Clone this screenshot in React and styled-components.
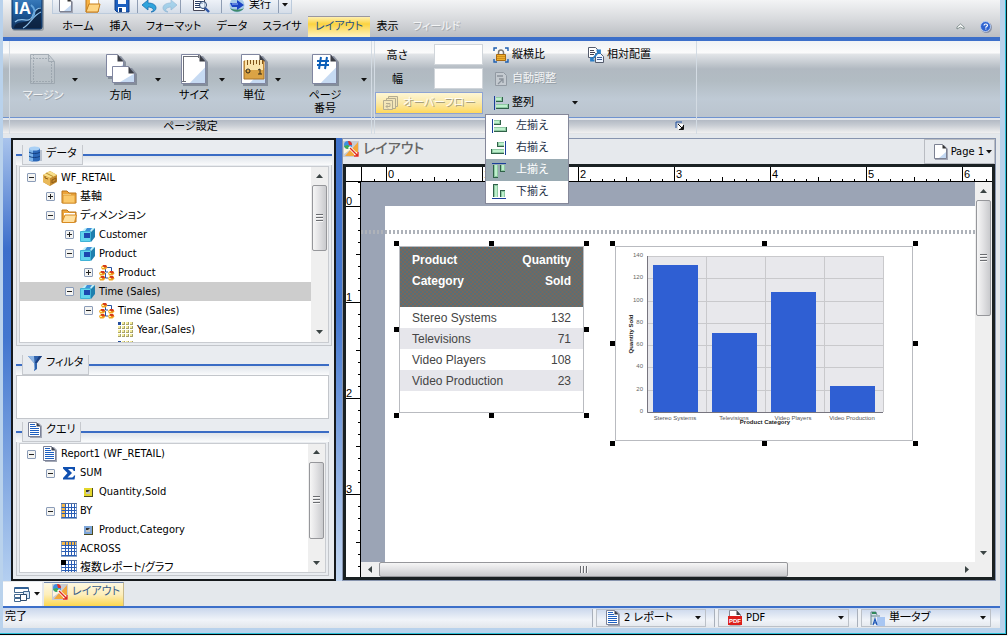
import React from "react"
import styled, { createGlobalStyle } from "styled-components"

const GlobalStyle = createGlobalStyle`
  * {
    box-sizing: border-box;
  }
  body {
    margin: 0;
    background: #f4f4f4;
    color: #000;
    font-family: "DejaVu Sans Condensed", "Noto Sans CJK JP", sans-serif;
    font-size: 11px;
    line-height: 16px;
  }
  button, input, select {
    font: inherit;
    color: inherit;
    margin: 0;
    padding: 0;
    border: 0;
    background: none;
  }
  svg {
    display: block;
    flex: none;
  }
`

/* ---------- icons ---------- */

const Svg = ({ w = 16, h = 16, box, children }) => (
  <svg width={w} height={h} viewBox={box || `0 0 ${w} ${h}`} aria-hidden="true">
    {children}
  </svg>
)

const CaretIcon = () => (
  <Svg w={6} h={4}><path d="M0 0h6L3 3.5z" fill="#111" /></Svg>
)

const NewIcon = () => (
  <Svg>
    <path d="M2 1h9l4 4v11H2z" fill="#a3a7b5" />
    <path d="M1.500 .500h8l4 4v10h-12z" fill="#fff" stroke="#7c8192" />
    <path d="M9.500 .500v4h4z" fill="#333" />
    <path d="M13 8v6H6z" fill="#c3d8f2" />
  </Svg>
)

const OpenIcon = () => (
  <Svg>
    <path d="M1 1h5l2 2h5v12H1z" fill="#f6b143" stroke="#b9741a" />
    <path d="M5 3h8v4H5z" fill="#fff" />
    <path d="M4 7h11l-2 8H1z" fill="#ffd685" stroke="#c77f1c" />
  </Svg>
)

const SaveIcon = () => (
  <Svg>
    <path d="M1 1h14v14H3l-2-2z" fill="#1b5fc0" stroke="#123f86" />
    <path d="M4 1h8v6H4z" fill="#f4f8ff" />
    <path d="M4 10h8v5H4z" fill="#fff" />
    <path d="M5 11h3v4H5z" fill="#123f86" />
  </Svg>
)

const UndoIcon = ({ faded }) => (
  <Svg>
    <g opacity={faded ? 0.35 : 1} transform={faded ? "matrix(-1 0 0 1 16 0)" : undefined}>
      <path d="M1 8l6-5v3c5 0 8 2 8 5 0 2-2 4-5 4 2-1 3-2 2-3s-2-2-5-2v3z" fill="#2fa4dc" stroke="#1b6fae" strokeWidth=".8" />
    </g>
  </Svg>
)

const PreviewIcon = () => (
  <Svg w={18}>
    <path d="M1.500 0h11v13.500h-11z" fill="#fff" stroke="#445" />
    <path d="M3 2.500h8M3 4.500h8M3 6.500h8M3 8.500h5M3 10.500h5" stroke="#2c3e63" />
    <circle cx="11" cy="8" r="3.5" fill="#dff0ff" fillOpacity=".7" stroke="#29446f" />
    <path d="M13 11l4 4" stroke="#2d55a5" strokeWidth="2.4" />
  </Svg>
)

const RunIcon = () => (
  <Svg>
    <circle cx="8" cy="8" r="7.5" fill="#a8cbe9" />
    <path d="M1 11c3 5 11 5 14 0-3 2-11 2-14 0z" fill="#3f8a6a" />
    <path d="M1 6h7V3l7 5-7 5v-3H3z" fill="#1c45c4" />
    <path d="M3 7h6" stroke="#9fbcf6" />
  </Svg>
)

const Logo = () => (
  <Svg w={33} h={31}>
    <defs>
      <linearGradient id="logoFill" x1="0" y1="0" x2="0" y2="1">
        <stop offset="0" stopColor="#4285c4" />
        <stop offset=".5" stopColor="#1e5c9e" />
        <stop offset="1" stopColor="#12335c" />
      </linearGradient>
    </defs>
    <rect x="1" y="-5" width="32" height="36" rx="3" fill="#98a0a8" />
    <rect x="1" y="-5" width="30" height="34" rx="2" fill="url(#logoFill)" stroke="#0d3362" />
    <path d="M3 28c2-9 12-3 16-9 3-5 5-10 11-12v21z" fill="#0c1e38" opacity=".75" />
    <path d="M4 22c6-6 14 2 17-5 2-6 5-9 9-9M12 28c7-3 9-12 18-16" stroke="#8fc0e8" strokeWidth="1.2" fill="none" />
    <path d="M20 5c4 3 5 8 1 13" stroke="#66a6dc" strokeWidth="2" fill="none" />
    <text x="3" y="14" fill="#fff" fontFamily="Liberation Sans" fontWeight="700" fontSize="17">IA</text>
  </Svg>
)

const Sheet = ({ x = 0, y = 0, w = 26, h = 30 }) => (
  <g transform={`translate(${x} ${y})`}>
    <path d={`M2 2h${w - 5}l5 6v${h - 6}H2z`} fill="#6f7787" opacity=".7" />
    <path d={`M.5 .5h${w - 7}l6 7v${h - 8}H.5z`} fill="#fff" stroke="#8086a0" />
    <path d={`M${w - 1} ${h * 0.45}V${h - 1}H${w * 0.35}z`} fill="#bcd3f0" opacity=".85" />
    <path d={`M${w - 6.5} .5v7h6z`} fill="#3a3d45" />
  </g>
)

const MarginIcon = () => (
  <Svg w={28} h={33}>
    <g fill="none" stroke="#98a2ab" opacity=".8">
      <path d="M1.500 1.500h18l6 7v22h-24z" fill="#bcc3c9" fillOpacity=".5" />
      <path d="M4.500 1v30M1 5.500h20M22.500 8v23M1 28.500h25" strokeDasharray="2 1" />
      <path d="M19.500 1v7.500h6" />
    </g>
  </Svg>
)

const OrientationIcon = () => (
  <Svg w={32} h={33}>
    <Sheet x={1} y={1} w={18} h={23} />
    <Sheet x={7} y={13} w={23} h={17} />
  </Svg>
)

const SizeIcon = () => (
  <Svg w={28} h={33}>
    <Sheet x={1} y={1} w={25} h={30} />
    <path d="M3.500 3v26M3 3.500h16M2 28.500h4M18.500 2v3" stroke="#6c6f78" fill="none" />
  </Svg>
)

const UnitIcon = () => (
  <Svg w={28} h={33}>
    <Sheet x={1} y={1} w={25} h={30} />
    <path d="M4 8h20v18H4z" fill="#dba345" stroke="#a8722a" />
    <path d="M5 7h18v10H5z" fill="#fbe4ad" />
    <path d="M7.500 7v5M10.500 7v4M13.500 7v5M16.500 7v4M19.500 7v5M22.500 7v4" stroke="#80531a" />
    <circle cx="8" cy="18" r="2" fill="none" stroke="#2c2416" />
    <path d="M18 17l2-1v5M18 21h4" fill="none" stroke="#2c2416" />
  </Svg>
)

const PageNumberIcon = () => (
  <Svg w={28} h={33}>
    <Sheet x={1} y={1} w={25} h={30} />
    <path d="M10 4l-2 12M16 4l-2 12M6 8h12M6 12h12" stroke="#0d5fb8" strokeWidth="2" />
  </Svg>
)

const OverflowIcon = () => (
  <Svg>
    <g fill="#f3e6b8" stroke="#b5ad90">
      <path d="M5.500 1.500h9v10h-9z" />
      <path d="M3.500 3.500h9v10h-9z" />
      <path d="M.500 5.500h9v9h-9z" />
      <path d="M3 8.500h4v3H3M5 9.500l-2 2 2 2" fill="none" />
    </g>
  </Svg>
)

const LockRatioIcon = () => (
  <Svg>
    <path d="M1 4V1h3M12 1h3v3M15 12v3h-3M4 15H1v-3" fill="none" stroke="#1f5fb0" strokeWidth="1.4" />
    <path d="M5.500 8V5.500a2.500 2.500 0 015 0v2.500" fill="none" stroke="#777" strokeWidth="1.5" />
    <path d="M3.500 7.500h9v6h-9z" fill="#eeb02e" stroke="#a86a12" />
    <path d="M4 9.500h8M4 11.500h8" stroke="#d08e1c" />
  </Svg>
)

const AutoFitIcon = () => (
  <Svg>
    <path d="M2.500 1.500h8l3 3v10h-11z" fill="#c4cad0" stroke="#929aa3" />
    <path d="M4 5h6M5 13l5-5M6 8h4v4" fill="none" stroke="#8a929b" strokeWidth="1.3" />
  </Svg>
)

const RelativeIcon = () => (
  <Svg>
    <path d="M.500 .500h7l2 2v8h-9z" fill="#fff" stroke="#555c6c" />
    <path d="M2 3.500h4M2 5.500h5M2 7.500h4" stroke="#445" />
    <path d="M7.500 6.500h5l3 3v6h-8z" fill="#eef5ff" stroke="#555c6c" />
    <path d="M9 10.500h5M9 12.500h5" stroke="#3c5f9a" />
    <path d="M3 13.500L12 3.500M8.500 3.500H12V7M3 10v3.500h3.500" stroke="#2b7fc8" strokeWidth="1.8" fill="none" />
  </Svg>
)

const alignTurn = {
  left: "matrix(1 0 0 1 0 0)",
  right: "matrix(-1 0 0 1 16 0)",
  top: "matrix(0 1 -1 0 16 0)",
  bottom: "matrix(0 -1 -1 0 16 16)",
}

const AlignIcon = ({ side }) => (
  <Svg>
    <g transform={alignTurn[side]}>
      <path d="M1.500 1v14" stroke="#1a3f9a" />
      <path d="M3 2h7v5H3zM3 9h13v5H3z" fill="#2f6148" />
      <path d="M3 2h6v4H3zM3 9h12v4H3z" fill="#8fc9a3" />
      <path d="M3 3h5v2H3zM3 10h11v2H3z" fill="#bdf0cc" />
    </g>
  </Svg>
)

const LauncherIcon = () => (
  <Svg w={9} h={9}>
    <path d="M1 7V1h6" fill="none" stroke="#1c4fa0" />
    <path d="M3 3h5v5H3z" fill="#fff" />
    <path d="M3 3l4 4M8.500 4v4.500H4" fill="none" stroke="#111" />
    <path d="M8 5v3H5z" fill="#111" />
  </Svg>
)

const ChevronUpIcon = () => (
  <Svg w={9} h={7}>
    <path d="M1 6V4l3.500-3L8 4v2L4.500 4z" fill="#fff" stroke="#6d7d7c" strokeWidth=".8" />
  </Svg>
)

const HelpIcon = () => (
  <Svg w={12} h={12}>
    <circle cx="6.500" cy="6.500" r="5.500" fill="#8b93a8" />
    <circle cx="5.500" cy="5.500" r="5" fill="#2e63d0" stroke="#b7cdf3" />
    <path d="M4 4.500c0-2 3.500-2 3.500 0 0 1-1.800 1-1.800 2.200M5.200 8h1.200" fill="none" stroke="#fff" strokeWidth="1.200" />
  </Svg>
)

const DatabaseIcon = () => (
  <Svg>
    <path d="M2 2h11v12c0 2-11 2-11 0z" fill="#2c68b8" />
    <path d="M2 2h4v13c-2 0-4 0-4-1z" fill="#7db4ea" />
    <ellipse cx="7.500" cy="2.500" rx="5.500" ry="2" fill="#a9d0f5" />
    <path d="M2 6c2 2 9 2 11 0M2 10c2 2 9 2 11 0" fill="none" stroke="#123e80" />
    <path d="M14 4v11" stroke="#8897ad" />
  </Svg>
)

const FunnelIcon = () => (
  <Svg>
    <path d="M1 1h14l-5 7v6l-3 2V8z" fill="#2f62ac" />
    <path d="M1 1h6l1 13-1 1V8z" fill="#8fb6e4" />
    <path d="M10 8l5-7h-3L8 8z" fill="#1b3f80" />
  </Svg>
)

const ReportIcon = () => (
  <Svg>
    <path d="M3 1h9l3 3v12H3z" fill="#a3a8b5" />
    <path d="M1.500 .500h8l4 4v10h-12z" fill="#fff" stroke="#7b8298" />
    <path d="M3 2.500h5M3 4.500h6M3 6.500h9M3 8.500h9M3 10.500h9M3 12.500h9" stroke="#1d5fc0" />
    <path d="M9.500 .500v4h4z" fill="#3a3f4d" />
  </Svg>
)

const PackageIcon = () => (
  <Svg>
    <path d="M8 1l7 4v7l-7 4-7-4V5z" fill="#c48a2e" />
    <path d="M1 5l7-4 7 4-7 3z" fill="#f8df8a" />
    <path d="M1 5l7 3v8l-7-4z" fill="#e9b95a" />
    <path d="M3 6v2l3 1M10 10l4-2v3l-4 2z" fill="none" stroke="#8f5d14" />
    <path d="M4 3l7 3.500" stroke="#b98b2c" />
  </Svg>
)

const FolderIcon = ({ open }) => (
  <Svg>
    <path d="M1 2h5l2 2h7v10H1z" fill="#eda43a" stroke="#b9741a" />
    {open
      ? <path d="M3 5h11v3H3z" fill="#fff" />
      : <path d="M2 5h8v9H2z" fill="#fff0b4" />}
    {open
      ? <path d="M4 7h11.500l-2 7.500H1z" fill="#ffe0a0" stroke="#d88b22" />
      : <path d="M2 6h12v8H2z" fill="#fbc96a" stroke="#dd9a35" />}
  </Svg>
)

const CubeIcon = () => (
  <Svg>
    <path d="M5 1h10l-4 4H1z" fill="#bdf1fb" />
    <path d="M.500 4.500h10v10H.500z" fill="#62d4ee" stroke="#3fb2d6" />
    <path d="M11 5l4-4v9l-4 5z" fill="#1e7fae" />
    <path d="M4 6h6v5H4z" fill="#1c48b0" />
    <path d="M7 1h5l-2 3H5z" fill="#3f8fd8" />
  </Svg>
)

const hierarchyNodes = [[2, 0], [0, 6], [9, 6], [0, 11], [9, 11]]

const HierarchyIcon = () => (
  <Svg>
    <path d="M7 2.500h5.500V6M6.500 3v4H9M6.500 8v5H9" fill="none" stroke="#2752a0" />
    {hierarchyNodes.map(([x, y]) => (
      <g key={`${x}-${y}`}>
        <path d={`M${x} ${y + 2}l2-2h3l1.500 2.500-2 2H${x + 1}z`} fill="#f2a51e" />
        <path d={`M${x + 2} ${y}h3l1 2-2 .500-2-1z`} fill="#d5391e" />
        <path d={`M${x + 1} ${y + 2}h2v1h-2z`} fill="#fff2a0" />
      </g>
    ))}
  </Svg>
)

const LevelIcon = () => (
  <Svg>
    {[0, 1, 2, 3].map((r) => [0, 1, 2, 3].map((c) => (
      <g key={`${r}${c}`}>
        <rect x={c * 4} y={r * 4} width="3" height="3" fill={r + c === 0 ? "#234d9c" : "#a8a26a"} />
        <rect x={c * 4} y={r * 4} width="2" height="2" fill={r + c === 0 ? "#234d9c" : "#f4ec9c"} />
      </g>
    )))}
  </Svg>
)

const SigmaIcon = () => (
  <Svg><path d="M2 2h12v4h-1.500c0-1-.5-2-2-2H7l4 4-4.500 4.500H11c1 0 1.500-1 2-2h1.200l-.7 4H2v-1.500L6.500 8 2 3.500z" fill="#0f4fb0" /></Svg>
)

const FieldIcon = ({ color }) => (
  <Svg>
    <path d="M4 4h9v9H4z" fill="#4c4b20" />
    <path d="M4 4h8v8H4z" fill={color} />
    <path d="M6 6h4v4H6z" fill="#333" />
    <path d="M6 8h2l2-2v4H6z" fill="#fff" opacity=".7" />
  </Svg>
)

const GridIcon = ({ mode }) => (
  <Svg>
    <path d="M0 0h16v16H0z" fill="#8ba5c8" />
    <path d="M1 1h14v13H1z" fill="#fff" />
    {mode === "by" && <path d="M1 1h3v13H1z" fill="#f5b84a" />}
    {mode === "across" && <path d="M1 1h14v3H1z" fill="#f5b84a" />}
    <path d="M.500 4.500h15M.500 7.500h15M.500 10.500h15M.500 14.500h15M4.500 0v15M7.500 0v15M10.500 0v15M13.500 0v15" stroke="#2a5db4" />
    <path d="M0 .500h16" stroke="#5470a0" />
    {mode === "multi" && <path d="M0 0h5v5H0z" fill="#000" />}
  </Svg>
)

const LayoutIcon = () => (
  <Svg>
    <path d="M0 0h16v16H0z" fill="#c8ccd2" />
    <path d="M8 8L2 15h12zM9 8l6-7v12z" fill="#f3a73a" />
    <path d="M8 8L1 13V3z" fill="#fff6df" />
    <circle cx="5" cy="4" r="4" fill="#3f8fe0" />
    <path d="M5 4l3 3c-2 2-6 1-7-2z" fill="#3fae4c" />
    <path d="M5 0a4 4 0 014 4L6 4z" fill="#e63022" />
    <path d="M6 6l9 9M15 11v4h-4" fill="none" stroke="#fff" strokeWidth="3" />
    <path d="M7 7l8 8M15 11v4h-4" fill="none" stroke="#dd2a1c" strokeWidth="1.400" />
  </Svg>
)

const WindowsIcon = () => (
  <Svg>
    <path d="M.500 1.500h14v5H.500z" fill="#fff" stroke="#42688f" />
    <path d="M1 2h13" stroke="#2f5f94" strokeWidth="2" />
    <path d="M.500 8.500h6v3h-6zM.500 12.500h6v3h-6z" fill="#fff" stroke="#42688f" />
    <path d="M9.500 5.500h6v7h-6z" fill="#d9e8f7" stroke="#42688f" />
    <path d="M6.500 8.500h6v6h-6z" fill="#fff" stroke="#2c4a6c" />
  </Svg>
)

const PdfIcon = () => (
  <Svg>
    <path d="M2.500 .500h7l4 4V15h-11z" fill="#fff" stroke="#888c98" />
    <path d="M9.500 0v5h4z" fill="#444" />
    <path d="M1 6h14v9H1z" fill="#dd1f1a" />
    <text x="2" y="13" fontFamily="Liberation Sans" fontWeight="700" fontSize="6" fill="#fff">PDF</text>
  </Svg>
)

const SingleTabIcon = () => (
  <Svg>
    <path d="M1 15V2h5l1 3" fill="#d6e4ea" stroke="#6b8791" />
    <path d="M2 2h4v2H2z" fill="#2f8a5b" />
    <path d="M1 6h9" stroke="#6b8791" />
    <path d="M7 7h8v9H7z" fill="#a8c6f2" />
    <path d="M3 15l2-6 2 6M4 13h3" fill="none" stroke="#1b54b4" strokeWidth="1.200" />
  </Svg>
)

const arrowPaths = { up: "M0 5l3.500-4L7 5z", down: "M0 1h7L3.500 5z", left: "M5 0v7L1 3.500z", right: "M2 0v7l4-3.500z" }
const ArrowIcon = ({ dir }) => (
  <Svg w={7} h={7}><path d={arrowPaths[dir]} fill="#3b4444" /></Svg>
)

/* ---------- window shell ---------- */

const Window = styled.div`
  display: flex;
  flex-direction: column;
  height: calc(100vh - 1px);
  margin-right: 1px;
  overflow: hidden;
  border-right: 1px solid #0b1c22;
  border-bottom: 1px solid #000;
`

const WindowRim = styled.div`
  display: flex;
  flex: 1;
  flex-direction: column;
  min-height: 0;
  border: solid #2cc0d8;
  border-width: 0 1px 1px 0;
`

const Shell = styled.div`
  display: flex;
  flex: 1;
  flex-direction: column;
  min-height: 0;
  background: #e4e8ec;
  border: solid #b9d2ec;
  border-width: 0 5px 5px 3px;
`

const Header = styled.header`
  display: flex;
  align-items: flex-start;
  height: 41px;
  padding-left: 8px;
  border-bottom: 4px solid #3c6fc9;
  background: linear-gradient(#f3f4f5, #d9dbde 50%, #bbbec3);
`

const HeaderMain = styled.div`
  flex: 1;
  padding-left: 8px;
`

const QuickBar = styled.div`
  display: flex;
  align-items: flex-end;
  width: max-content;
  height: 14px;
  overflow: hidden;
  border: solid #bccbdc;
  border-width: 0 1px 1px;
  background: linear-gradient(#eef2f8, #d5dde8);
`

const QuickButton = styled.button`
  display: flex;
  align-items: center;
  justify-content: center;
  gap: 4px;
  width: ${(p) => p.$w}px;
  height: 16px;
`

const Divider = styled.span`
  width: 1px;
  height: 16px;
  background: #8f9db3;
`

const Tabs = styled.nav`
  display: flex;
  align-items: flex-end;
  height: 23px;
  padding: 2px 8px 0 2px;
`

const Tab = styled.button`
  width: ${(p) => p.$w}px;
  height: 21px;
  white-space: nowrap;
  font-feature-settings: "palt";
  color: ${(p) => (p.$active ? "#2b5585" : "#000")};
  background: ${(p) => (p.$active ? "linear-gradient(#fff0b0, #fcd340 35%, #fff3c2)" : "none")};
  border-top: ${(p) => (p.$active ? "1px solid #9a97a0" : "0")};

  &:disabled {
    color: #f4f5f6;
    text-shadow: 1px 1px 0 #a7abb0;
  }
`

const HeaderTools = styled.div`
  display: flex;
  align-items: center;
  gap: 15px;
  height: 21px;
  margin-left: auto;

  button {
    display: flex;
  }
`

/* ---------- ribbon ---------- */

const Ribbon = styled.section`
  display: flex;
  height: 93px;
  padding-left: 6px;
  gap: 2px;
  background: linear-gradient(
    #eff2f5 0, #fbfbfb 12px, #e2e5e8 13px, #b1b9c1 28px, #b2bcc3 40px,
    #bfcad5 58px, #bac4ce 76px, #6f93cf 76px, #6f93cf 77px, #e2e6eb 77px,
    #e2e6eb 79px, #b3bac4 79px, #c6cbd2 84px, #f0f0f0 92px, #d4d8dd 93px
  );
`

const Group = styled.div`
  display: flex;
  flex-direction: column;
  border: solid #d3dbe3;
  border-width: 0 1px;
  width: ${(p) => p.$w}px;
`

const GroupBody = styled.div`
  display: flex;
  height: 76px;
`

const GroupCaption = styled.div`
  display: flex;
  align-items: center;
  justify-content: ${(p) => (p.$end ? "flex-end" : "center")};
  height: 17px;
  padding: 3px 12px 0 12px;
  font-feature-settings: "palt";

  button {
    display: flex;
    padding-bottom: 3px;
  }
`

const BigButton = styled.button`
  display: flex;
  align-items: flex-start;
  width: ${(p) => p.$w}px;
  padding: 12px 3px 0 5px;
  font-feature-settings: "palt";

  &:disabled {
    color: #f4f5f6;
    text-shadow: 1px 1px 0 #9ba3ab;
  }
`

const BigLabel = styled.span`
  display: flex;
  flex: 1;
  flex-direction: column;
  align-items: center;
  gap: 3px;
  line-height: 13px;
`

const BigCaret = styled.span`
  display: flex;
  justify-content: center;
  width: 8px;
  padding-top: 25px;
`

const SizeColumn = styled.div`
  display: flex;
  flex-direction: column;
  gap: 4px;
  width: 108px;
  padding-top: 3px;
`

const SizeField = styled.label`
  display: flex;
  align-items: center;
  height: 20px;

  span {
    flex: 1;
    padding: 4px 14px 0 0;
    text-align: center;
  }
  input {
    width: 49px;
    height: 21px;
    background: #fff;
    border: 1px solid #d0d5da;
  }
`

const OverflowButton = styled.button`
  display: flex;
  align-items: center;
  justify-content: center;
  gap: 4px;
  height: 22px;
  border: 1px solid #8ea4d4;
  background: linear-gradient(#fdf6d5, #fbe9a8 50%, #ffd95c);
  font-feature-settings: "palt";

  &:disabled {
    color: #fffdf4;
    text-shadow: 1px 1px 0 #a9a07c;
  }
`

const ToolColumn = styled.div`
  display: flex;
  flex-direction: column;
  width: ${(p) => p.$w}px;
  margin-left: 10px;
  padding-top: 2px;
`

const ToolButton = styled.button`
  display: flex;
  align-items: center;
  gap: 3px;
  width: 100%;
  height: 24px;
  white-space: nowrap;

  &:disabled {
    color: #f4f5f6;
    text-shadow: 1px 1px 0 #969ea6;
  }
  > svg:last-child:not(:first-child) {
    margin-left: auto;
  }
`

const MenuAnchor = styled.div`
  position: relative;
`

const Menu = styled.div`
  position: absolute;
  z-index: 5;
  top: 23px;
  left: -8px;
  width: 84px;
  border: 1px solid #85889a;
  background: #fff;
`

const MenuItem = styled.button`
  display: flex;
  align-items: center;
  gap: 9px;
  width: 100%;
  height: 22px;
  padding-left: 5px;
  color: ${(p) => (p.$active ? "#fff" : "#1f3349")};
  background: ${(p) => (p.$active ? "#9aabb3" : "#fff")};
`

/* ---------- main area ---------- */

const Main = styled.main`
  display: flex;
  flex: 1;
  min-height: 0;
  margin-top: 4px;
  padding-right: 4px;
`

const Edge = styled.div`
  flex: 0 0 ${(p) => p.$w}px;
  background: linear-gradient(#a9c4ec, #3d6fcb 25%, #4276cf 45%, #b4cff0);
`

const Sidebar = styled.aside`
  display: flex;
  flex: 0 0 325px;
  flex-direction: column;
  padding: 5px 2px 3px 3px;
  border: 2px solid #15191c;
  background: #e9ecf0;
`

const Splitter = styled.div`
  flex: 0 0 6px;
  background: linear-gradient(#3f72cb, #4478d0 40%, #c4d8f2);
`

const PanelHead = styled.div`
  display: flex;
  height: 20px;
  margin-top: ${(p) => p.$gap || 0}px;
  margin-right: ${(p) => (p.$narrow ? 3 : 0)}px;

  &::before, &::after {
    content: "";
    margin-top: 9px;
    border: solid #3a6cc4;
    border-width: 2px 0 0;
    background: linear-gradient(#dfe4ea, #fafbfc);
  }
  &::before {
    width: 6px;
  }
  &::after {
    flex: 1;
  }
`

const PanelTitle = styled.h2`
  display: flex;
  align-items: center;
  gap: 3px;
  margin: 0;
  padding: 0 5px 2px 4px;
  border: solid #c6c9ce;
  border-width: 0 1px 1px;
  font-size: 11px;
  font-weight: 400;
  font-feature-settings: "palt";
`

const PanelBox = styled.div`
  display: flex;
  flex: ${(p) => p.$grow} 1 0;
  min-height: 0;
  margin-right: ${(p) => (p.$narrow ? 3 : 0)}px;
  padding: 1px 2px 2px;
  border: solid #c3c6cb;
  border-width: 0 1px 1px;
`

const PanelInner = styled.div`
  display: flex;
  flex: 1;
  min-width: 0;
  border: 1px solid #c9ccd1;
  background: #fff;
`

const FilterBox = styled.div`
  height: 44px;
  margin-right: 3px;
  border: 1px solid #c3c6cb;
  background: #fff;
`

const Tree = styled.ul`
  flex: 1;
  min-width: 0;
  margin: 0;
  padding: 1px 0 0;
  overflow: hidden;
  list-style: none;
`

const TreeRow = styled.li`
  display: flex;
  align-items: center;
  gap: 3px;
  height: 19px;
  padding-left: ${(p) => 7 + 19 * p.$level}px;
  white-space: nowrap;
  font-feature-settings: "palt";
  background: ${(p) => (p.$active ? "#cdcdcd" : "none")};
`

const Expander = styled.button`
  width: 9px;
  height: 9px;
  margin-right: 3px;
  border: 1px solid #8b9cb8;
  border-radius: 1px;
  background:
    linear-gradient(#222, #222) center / 5px 1px no-repeat,
    linear-gradient(#222, #222) center / 1px ${(p) => (p.$open ? 0 : 5)}px no-repeat,
    #f4f4f2;
  visibility: ${(p) => (p.$hidden ? "hidden" : "visible")};
`

const Scrollbar = styled.div`
  display: flex;
  flex-direction: ${(p) => (p.$horizontal ? "row" : "column")};
  align-items: stretch;
  ${(p) => (p.$horizontal ? "height: 15px;" : "width: 17px;")}
  flex: none;
  padding: ${(p) => (p.$horizontal ? "0" : "0 1px")};
  background: #efefef;
`

const ScrollArrow = styled.button`
  display: flex;
  align-items: center;
  justify-content: center;
  flex: 0 0 18px;
`

const Thumb = styled.div`
  display: flex;
  flex-direction: ${(p) => (p.$horizontal ? "row" : "column")};
  align-items: center;
  justify-content: center;
  gap: 1px;
  flex: 0 1 ${(p) => p.$size}px;
  border: 1px solid #96979b;
  border-radius: 2px;
  background: linear-gradient(${(p) => (p.$horizontal ? "180deg" : "90deg")}, #f6f6f6, #e3e3e5 45%, #c9cacd);

  i {
    ${(p) => (p.$horizontal ? "width: 2px; height: 7px;" : "width: 7px; height: 2px;")}
    background: #6a6c70;
    border: solid #f8f8f8;
    border-width: ${(p) => (p.$horizontal ? "0 1px 0 0" : "0 0 1px")};
  }
`

const Spacer = styled.div`
  flex: 1;
`

/* ---------- workspace ---------- */

const Workspace = styled.section`
  display: flex;
  flex: 1;
  flex-direction: column;
  min-width: 0;
  border: 1px solid #8794ae;
`

const WorkTitle = styled.div`
  display: flex;
  align-items: center;
  height: 25px;
  background: #e6e9ed;

  h1 {
    flex: 1;
    margin: 0 0 0 4px;
    padding-bottom: 8px;
    color: #666;
    font-size: 14px;
    font-weight: 500;
    line-height: 16px;
    font-feature-settings: "palt";
  }
  > svg {
    margin-bottom: 6px;
  }
`

const PageButton = styled.button`
  display: flex;
  align-items: center;
  height: 25px;
  gap: 2px;
  padding: 0 2px 0 8px;
  border: 1px solid #b9bcc2;
`

const Frame = styled.div`
  display: flex;
  flex: 1;
  flex-direction: column;
  min-height: 0;
  border: 3px solid #1a2123;
  background: #fff;
`

const TopRuler = styled.div`
  height: 15px;
  overflow: hidden;
`

const SideRuler = styled.div`
  width: 15px;
  overflow: hidden;
`

const FrameRow = styled.div`
  display: flex;
  flex: 1;
  min-height: 0;
`

const CanvasColumn = styled.div`
  display: flex;
  flex: 1;
  flex-direction: column;
  min-width: 0;
`

const SideScroll = styled.div`
  display: flex;
  padding-bottom: 15px;
  background: #efefef;
`

const Canvas = styled.div`
  position: relative;
  flex: 1;
  overflow: hidden;
  padding: 24px 0 0 24px;
  background: #9ba4b5;
`

const Paper = styled.div`
  height: 100%;
  background: #fff;
`

const HeaderGuide = styled.div`
  position: absolute;
  top: 48px;
  left: 0;
  right: 0;
  height: 4px;
  background: repeating-linear-gradient(90deg, #aeb2b9 0 2px, transparent 2px 4px);
`

const Item = styled.div`
  position: absolute;
  top: 64px;
  left: ${(p) => p.$left}px;
  width: ${(p) => p.$w}px;
  height: ${(p) => p.$h}px;
  border: 1px solid #b9bbc0;
  background: #fff;
`

const Handle = styled.span`
  position: absolute;
  top: calc(${(p) => p.$y} * (100% + 7px) / 2 - 6px);
  left: calc(${(p) => p.$x} * (100% + 7px) / 2 - 6px);
  width: 5px;
  height: 5px;
  background: #000;
`

const ReportTable = styled.table`
  width: 100%;
  border-collapse: collapse;
  font-family: "Liberation Sans", Arial, sans-serif;
  font-size: 12px;
  line-height: 21px;
  white-space: nowrap;
  color: #444;

  th {
    height: 60px;
    padding: 3px 0 0 12px;
    vertical-align: top;
    color: #fff;
    text-align: left;
  }
  thead {
    background: repeating-conic-gradient(#7b675a 0 25%, #566f78 0 50%) 0 0 / 4px 4px;
  }
  td {
    height: 21px;
    padding: 1px 0 0 12px;
    line-height: 20px;
  }
  th:last-child, td:last-child {
    padding-right: 12px;
    text-align: right;
  }
  tbody tr:nth-child(even) {
    background: #e6e6eb;
  }
`

/* ---------- bottom ---------- */

const SheetTabs = styled.div`
  display: flex;
  gap: 2px;
  height: 25px;
  padding-top: 1px;
  background: #e4e8ec;
`

const WindowListButton = styled.button`
  display: flex;
  align-items: center;
  justify-content: center;
  gap: 4px;
  width: 39px;
  padding-left: 8px;
  background: #fdfdfd;
`

const SheetTab = styled.button`
  display: flex;
  align-items: center;
  gap: 4px;
  width: 80px;
  padding: 0 8px 6px;
  border-top: 1px solid #6f86ad;
  border-right: 1px solid #c8b98a;
  background: linear-gradient(#fdf8e2, #fdeebb 50%, #fcd74e);
  color: #3a5f8a;
  white-space: nowrap;
  font-feature-settings: "palt";
`

const StatusBar = styled.footer`
  display: flex;
  height: 22px;
  padding: 0 9px 0 0;
  gap: 12px;
  border-top: 2px solid #3c6fc9;
  background: linear-gradient(#c9d6ec, #f1f4f9 60%, #e2e6eb);
`

const StatusText = styled.div`
  flex: 1;
  padding-left: 2px;
  line-height: 18px;
`

const Combo = styled.label`
  display: flex;
  align-items: center;
  gap: 3px;
  width: ${(p) => p.$w}px;
  margin: 1px 0;
  padding: 0 4px 0 8px;
  border: 1px solid #bcc1c8;
  box-shadow: -3px 0 0 #edf0f4, -4px 0 0 #a9b0bb;

  select {
    flex: 1;
    min-width: 0;
    appearance: none;
    outline: none;
    font-feature-settings: "palt";
  }
`

/* ---------- data ---------- */

const tabs = [
  { label: "ホーム", w: 48 },
  { label: "挿入", w: 37 },
  { label: "フォーマット", w: 69 },
  { label: "データ", w: 48 },
  { label: "スライサ", w: 52 },
  { label: "レイアウト", w: 62, active: true },
  { label: "表示", w: 35 },
  { label: "フィールド", w: 63, disabled: true },
]

const pageTools = [
  { label: ["マージン"], icon: <MarginIcon />, w: 72, disabled: true },
  { label: ["方向"], icon: <OrientationIcon />, w: 83 },
  { label: ["サイズ"], icon: <SizeIcon />, w: 64 },
  { label: ["単位"], icon: <UnitIcon />, w: 56 },
  { label: ["ページ", "番号"], icon: <PageNumberIcon />, w: 86 },
]

const alignItems = [
  { label: "左揃え", side: "left" },
  { label: "右揃え", side: "right" },
  { label: "上揃え", side: "top", active: true },
  { label: "下揃え", side: "bottom" },
]

const dataTree = [
  { label: "WF_RETAIL", level: 0, icon: <PackageIcon />, open: true },
  { label: "基軸", level: 1, icon: <FolderIcon />, open: false },
  { label: "ディメンション", level: 1, icon: <FolderIcon open />, open: true },
  { label: "Customer", level: 2, icon: <CubeIcon />, open: false },
  { label: "Product", level: 2, icon: <CubeIcon />, open: true },
  { label: "Product", level: 3, icon: <HierarchyIcon />, open: false },
  { label: "Time (Sales)", level: 2, icon: <CubeIcon />, open: true, active: true },
  { label: "Time (Sales)", level: 3, icon: <HierarchyIcon />, open: true },
  { label: "Year,(Sales)", level: 4, icon: <LevelIcon />, leaf: true },
  { label: "", level: 4, icon: <LevelIcon />, leaf: true },
]

const queryTree = [
  { label: "Report1 (WF_RETAIL)", level: 0, icon: <ReportIcon />, open: true },
  { label: "SUM", level: 1, icon: <SigmaIcon />, open: true },
  { label: "Quantity,Sold", level: 2, icon: <FieldIcon color="#e3d62c" />, leaf: true },
  { label: "BY", level: 1, icon: <GridIcon mode="by" />, open: true },
  { label: "Product,Category", level: 2, icon: <FieldIcon color="#7ea6d8" />, leaf: true },
  { label: "ACROSS", level: 1, icon: <GridIcon mode="across" />, leaf: true },
  { label: "複数レポート/グラフ", level: 1, icon: <GridIcon mode="multi" />, leaf: true },
]

const sales = [
  { name: "Stereo Systems", sold: 132 },
  { name: "Televisions", sold: 71 },
  { name: "Video Players", sold: 108 },
  { name: "Video Production", sold: 23 },
]

const combos = [
  { name: "レポート一覧", value: "2 レポート", icon: <ReportIcon />, w: 110 },
  { name: "出力形式", value: "PDF", icon: <PdfIcon />, w: 131 },
  { name: "出力先", value: "単一タブ", icon: <SingleTabIcon />, w: 130 },
]

/* ---------- parts ---------- */

const ScrollBar = ({ size, horizontal }) => (
  <Scrollbar $horizontal={horizontal}>
    <ScrollArrow aria-label={horizontal ? "左" : "上"}><ArrowIcon dir={horizontal ? "left" : "up"} /></ScrollArrow>
    <Thumb $size={size} $horizontal={horizontal}><i /><i /><i /></Thumb>
    <Spacer />
    <ScrollArrow aria-label={horizontal ? "右" : "下"}><ArrowIcon dir={horizontal ? "right" : "down"} /></ScrollArrow>
  </Scrollbar>
)

const TreeView = ({ rows }) => (
  <Tree>
    {rows.map((row, i) => (
      <TreeRow key={i} $level={row.level} $active={row.active}>
        <Expander $open={row.open} $hidden={row.leaf} aria-label="展開" />
        {row.icon}
        <span>{row.label}</span>
      </TreeRow>
    ))}
  </Tree>
)

const Handles = () => (
  <>
    {[0, 1, 2].map((x) => [0, 1, 2].map((y) => (
      x === 1 && y === 1 ? null : <Handle key={`${x}${y}`} $x={x} $y={y} />
    )))}
  </>
)

// 12px between ticks, 8 ticks to the inch
const Ruler = ({ vertical, inches }) => {
  const start = vertical ? 24 : 40
  const ticks = Array.from({ length: 240 }, (_, i) => i - (vertical ? 2 : 1))
  const labels = Array.from({ length: inches + 1 }, (_, i) => i)
  return (
    <svg width={vertical ? 15 : 2900} height={vertical ? 2900 : 15} shapeRendering="crispEdges">
      {!vertical && <path d="M0 14.500H2900M15.500 0V15" stroke="#000" />}
      {vertical && <path d="M14.500 0V2900" stroke="#000" />}
      {ticks.map((k) => {
        const at = start + k * 12 + 0.5
        const len = k % 8 === 0 ? 15 : k % 4 === 0 ? 5 : 3
        return <path key={k} stroke="#000" d={vertical ? `M15 ${at}h-${len}` : `M${at} 15v-${len}`} />
      })}
      <g fontFamily="Liberation Sans" fontSize="11">
        {labels.map((n) => (
          <text key={n} x={vertical ? 0 : start + n * 96 + 2} y={vertical ? start + n * 96 - 1 : 11}>{n}</text>
        ))}
      </g>
    </svg>
  )
}

const Chart = () => {
  const top = 9
  const base = 165
  const left = 31
  const step = 59
  const y = (v) => base - (v * (base - top)) / 140
  return (
    <svg width="296" height="193" fontFamily="Liberation Sans" fontSize="6">
      <rect x={left} y={top} width={step * 4} height={base - top} fill="#e8e8ec" />
      {[0, 20, 40, 60, 80, 100, 120, 140].map((v) => (
        <g key={v}>
          <path d={`M${left} ${Math.round(y(v)) + 0.5}h${step * 4}`} stroke="#c9c9cc" />
          <text x="27" y={y(v) + 1} textAnchor="end" fill="#666">{v}</text>
        </g>
      ))}
      {[1, 2, 3, 4].map((n) => (
        <path key={n} d={`M${left + n * step + 0.5} ${top}V${base}`} stroke="#c9c9cc" />
      ))}
      {sales.map((s, i) => (
        <g key={s.name}>
          <rect x={left + 6 + i * step} y={Math.round(y(s.sold))} width="45" height={base - Math.round(y(s.sold))} fill="#2f5fd3" />
          <text x={left + 28 + i * step} y="173" textAnchor="middle" fill="#555">{s.name}</text>
        </g>
      ))}
      <path d={`M${left + 0.5} ${top}V${base + 0.5}H${left + step * 4}`} fill="none" stroke="#77757f" />
      <text x="149" y="177" textAnchor="middle" fontWeight="700" fill="#222">Product Category</text>
      <text x="17" y="87" textAnchor="middle" fontWeight="700" fill="#222" transform="rotate(-90 17 87)">Quantity Sold</text>
    </svg>
  )
}

const AppHeader = () => (
  <Header>
    <Logo />
    <HeaderMain>
      <QuickBar>
        <QuickButton $w={26} aria-label="新規"><NewIcon /></QuickButton>
        <QuickButton $w={28} aria-label="開く"><OpenIcon /></QuickButton>
        <QuickButton $w={30} aria-label="保存"><SaveIcon /></QuickButton>
        <Divider />
        <QuickButton $w={22} aria-label="元に戻す"><UndoIcon /></QuickButton>
        <QuickButton $w={20} aria-label="やり直し"><UndoIcon faded /></QuickButton>
        <Divider />
        <QuickButton $w={40} aria-label="プレビュー"><PreviewIcon /></QuickButton>
        <Divider />
        <QuickButton $w={56}><RunIcon />実行</QuickButton>
        <Divider />
        <QuickButton $w={12} aria-label="実行オプション"><CaretIcon /></QuickButton>
      </QuickBar>
      <Tabs>
        {tabs.map((t) => (
          <Tab key={t.label} $w={t.w} $active={t.active} disabled={t.disabled}>{t.label}</Tab>
        ))}
        <HeaderTools>
          <button aria-label="リボンを最小化"><ChevronUpIcon /></button>
          <button aria-label="ヘルプ"><HelpIcon /></button>
        </HeaderTools>
      </Tabs>
    </HeaderMain>
  </Header>
)

const LayoutRibbon = () => (
  <Ribbon>
    <Group $w={363}>
      <GroupBody>
        {pageTools.map((t) => (
          <BigButton key={t.label[0]} $w={t.w} disabled={t.disabled}>
            <BigLabel>
              {t.icon}
              <span>
                {t.label.map((line) => <React.Fragment key={line}>{line}<br /></React.Fragment>)}
              </span>
            </BigLabel>
            <BigCaret><CaretIcon /></BigCaret>
          </BigButton>
        ))}
      </GroupBody>
      <GroupCaption>ページ設定</GroupCaption>
    </Group>
    <Group $w={323}>
      <GroupBody>
        <SizeColumn>
          <SizeField><span>高さ</span><input type="text" /></SizeField>
          <SizeField><span>幅</span><input type="text" /></SizeField>
          <OverflowButton disabled><OverflowIcon />オーバーフロー</OverflowButton>
        </SizeColumn>
        <ToolColumn $w={85}>
          <ToolButton><LockRatioIcon />縦横比</ToolButton>
          <ToolButton disabled><AutoFitIcon />自動調整</ToolButton>
          <MenuAnchor>
            <ToolButton aria-expanded="true"><AlignIcon side="left" />整列<CaretIcon /></ToolButton>
            <Menu>
              {alignItems.map((item) => (
                <MenuItem key={item.side} $active={item.active}>
                  <AlignIcon side={item.side} />
                  {item.label}
                </MenuItem>
              ))}
            </Menu>
          </MenuAnchor>
        </ToolColumn>
        <ToolColumn $w={70}>
          <ToolButton><RelativeIcon />相対配置</ToolButton>
        </ToolColumn>
      </GroupBody>
      <GroupCaption $end>
        <button aria-label="詳細"><LauncherIcon /></button>
      </GroupCaption>
    </Group>
  </Ribbon>
)

const SidePanels = () => (
  <Sidebar>
    <PanelHead><PanelTitle><DatabaseIcon />データ</PanelTitle></PanelHead>
    <PanelBox $grow={182}>
      <PanelInner>
        <TreeView rows={dataTree} />
        <ScrollBar size={66} />
      </PanelInner>
    </PanelBox>
    <PanelHead $gap={9} $narrow><PanelTitle><FunnelIcon />フィルタ</PanelTitle></PanelHead>
    <FilterBox />
    <PanelHead $gap={3} $narrow><PanelTitle><ReportIcon />クエリ</PanelTitle></PanelHead>
    <PanelBox $grow={134} $narrow>
      <PanelInner>
        <TreeView rows={queryTree} />
        <ScrollBar size={77} />
      </PanelInner>
    </PanelBox>
  </Sidebar>
)

const LayoutWorkspace = () => (
  <Workspace>
    <WorkTitle>
      <LayoutIcon />
      <h1>レイアウト</h1>
      <PageButton><NewIcon />Page 1<CaretIcon /></PageButton>
    </WorkTitle>
    <Frame>
      <TopRuler><Ruler inches={6} /></TopRuler>
      <FrameRow>
        <SideRuler><Ruler vertical inches={3} /></SideRuler>
        <CanvasColumn>
          <Canvas>
            <Paper />
            <HeaderGuide />
            <Item $left={38} $w={185} $h={167}>
              <ReportTable>
                <thead>
                  <tr><th>Product<br />Category</th><th>Quantity<br />Sold</th></tr>
                </thead>
                <tbody>
                  {sales.map((s) => <tr key={s.name}><td>{s.name}</td><td>{s.sold}</td></tr>)}
                </tbody>
              </ReportTable>
              <Handles />
            </Item>
            <Item $left={254} $w={298} $h={195}>
              <Chart />
              <Handles />
            </Item>
          </Canvas>
          <ScrollBar size={409} horizontal />
        </CanvasColumn>
        <SideScroll><ScrollBar size={116} /></SideScroll>
      </FrameRow>
    </Frame>
  </Workspace>
)

const App = () => {
  return (
    <>
      <GlobalStyle />
      <Window>
        <WindowRim>
          <Shell>
            <AppHeader />
            <LayoutRibbon />
            <Main>
              <Edge $w={8} />
              <SidePanels />
              <Splitter />
              <LayoutWorkspace />
            </Main>
            <SheetTabs>
              <WindowListButton aria-label="ウィンドウ一覧"><WindowsIcon /><CaretIcon /></WindowListButton>
              <SheetTab><LayoutIcon />レイアウト</SheetTab>
            </SheetTabs>
            <StatusBar>
              <StatusText>完了</StatusText>
              {combos.map((c) => (
                <Combo key={c.name} $w={c.w}>
                  {c.icon}
                  <select aria-label={c.name} defaultValue={c.value}><option>{c.value}</option></select>
                  <CaretIcon />
                </Combo>
              ))}
            </StatusBar>
          </Shell>
        </WindowRim>
      </Window>
    </>
  )
}

export default App
